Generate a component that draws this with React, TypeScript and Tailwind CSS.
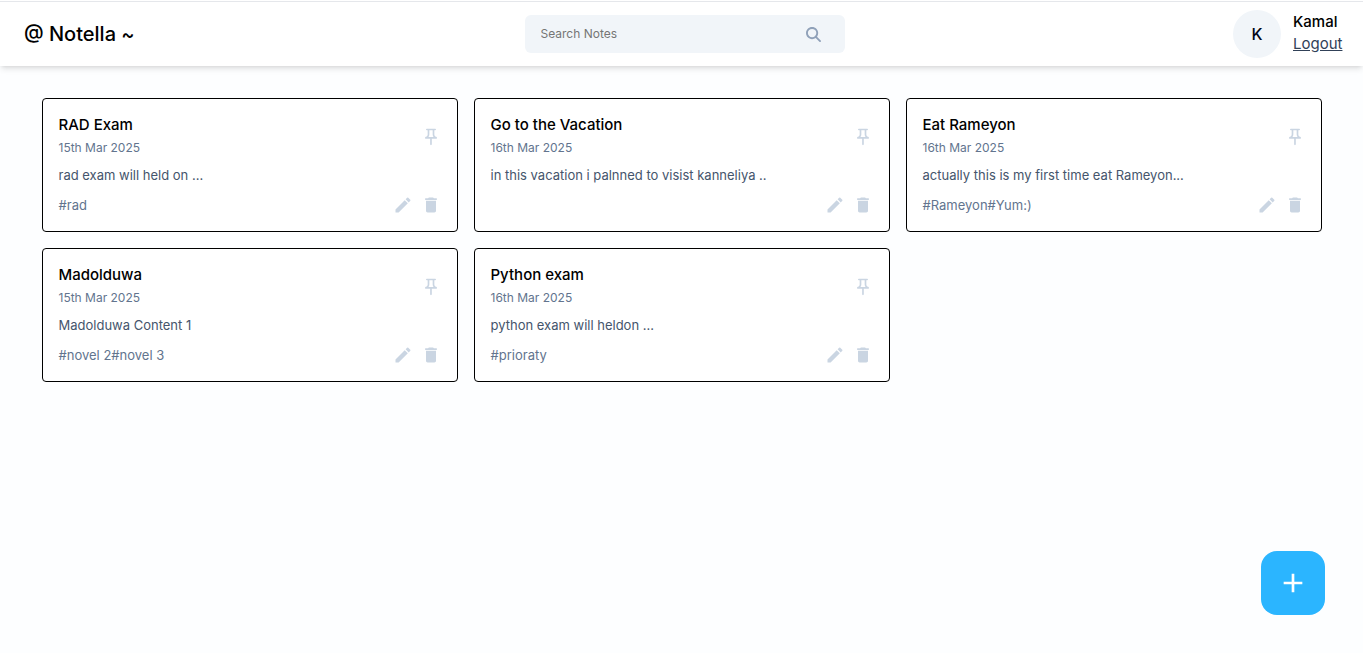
import { useState } from "react";
import { FaMagnifyingGlass } from "react-icons/fa6";
import {
  MdAdd,
  MdCreate,
  MdDelete,
  MdOutlinePushPin,
} from "react-icons/md";

type Note = {
  id: number;
  title: string;
  date: string;
  content: string;
  tags: string[];
};

const notes: Note[] = [
  { id: 1, title: "RAD Exam", date: "15th Mar 2025", content: "rad exam will held on ...", tags: ["rad"] },
  { id: 2, title: "Go to the Vacation", date: "16th Mar 2025", content: "in this vacation i palnned to visist kanneliya ..", tags: [] },
  { id: 3, title: "Eat Rameyon", date: "16th Mar 2025", content: "actually this is my first time eat Rameyon...", tags: ["Rameyon", "Yum:)"] },
  { id: 4, title: "Madolduwa", date: "15th Mar 2025", content: "Madolduwa Content 1", tags: ["novel 2", "novel 3"] },
  { id: 5, title: "Python exam", date: "16th Mar 2025", content: "python exam will heldon ...", tags: ["prioraty"] },
];

function SearchBar() {
  const [query, setQuery] = useState("");
  return (
    <form
      className="flex h-[38px] w-80 items-center rounded-md bg-slate-100 pl-4 pr-6"
      onSubmit={(e) => e.preventDefault()}
    >
      <input
        type="text"
        aria-label="Search Notes"
        placeholder="Search Notes"
        value={query}
        onChange={(e) => setQuery(e.target.value)}
        className="min-w-0 flex-1 bg-transparent text-xs outline-none placeholder:text-[#757575]"
      />
      <button type="submit" aria-label="Search" className="text-slate-400">
        <FaMagnifyingGlass size={15} />
      </button>
    </form>
  );
}

function Profile() {
  return (
    <div className="flex w-[108px] items-center gap-3">
      <div className="flex size-12 shrink-0 items-center justify-center rounded-full bg-slate-100 font-medium text-slate-950">
        K
      </div>
      <div className="whitespace-nowrap">
        <p className="text-[15px] leading-5 font-medium">Kamal</p>
        <a href="#logout" className="block text-[15px] leading-6 text-slate-700 underline">
          Logout
        </a>
      </div>
    </div>
  );
}

function NoteCard({ note }: { note: Note }) {
  return (
    <article className="rounded border border-black bg-white p-4">
      <div className="flex items-center justify-between">
        <div>
          <h2 className="text-[15px] leading-5 font-medium">{note.title}</h2>
          <p className="mt-0.5 text-xs leading-[22px] text-slate-500">{note.date}</p>
        </div>
        <button type="button" aria-label={`Pin ${note.title}`} className="text-slate-300">
          <MdOutlinePushPin size={20} />
        </button>
      </div>
      <p className="mt-2 text-[13px] leading-4 text-slate-600">{note.content}</p>
      <div className="mt-2 flex h-6 items-center justify-between pt-1">
        <p className="text-[13px] leading-4 text-slate-500">{note.tags.map((tag) => `#${tag}`).join("")}</p>
        <div className="flex items-center gap-2 text-slate-300">
          <button type="button" aria-label={`Edit ${note.title}`}>
            <MdCreate size={20} />
          </button>
          <button type="button" aria-label={`Delete ${note.title}`}>
            <MdDelete size={20} />
          </button>
        </div>
      </div>
    </article>
  );
}

export default function App() {
  return (
    <div className="min-h-screen bg-[#fdfeff] font-['Inter',sans-serif] text-black">
      <header className="bg-white pt-px shadow-md">
        <div className="flex items-center justify-between border-t border-gray-200 py-2 pl-6 pr-[22px]">
          <h1 className="w-28 whitespace-nowrap text-xl font-medium">@ Notella ~</h1>
          <SearchBar />
          <Profile />
        </div>
      </header>

      <main className="mx-auto mt-8 grid max-w-7xl grid-cols-3 gap-4">
        {notes.map((note) => (
          <NoteCard key={note.id} note={note} />
        ))}
      </main>

      <button
        type="button"
        aria-label="Add note"
        className="fixed bottom-[38px] right-[38px] flex size-16 items-center justify-center rounded-2xl bg-[#2bb5ff] text-white"
      >
        <MdAdd size={32} />
      </button>
    </div>
  );
}
